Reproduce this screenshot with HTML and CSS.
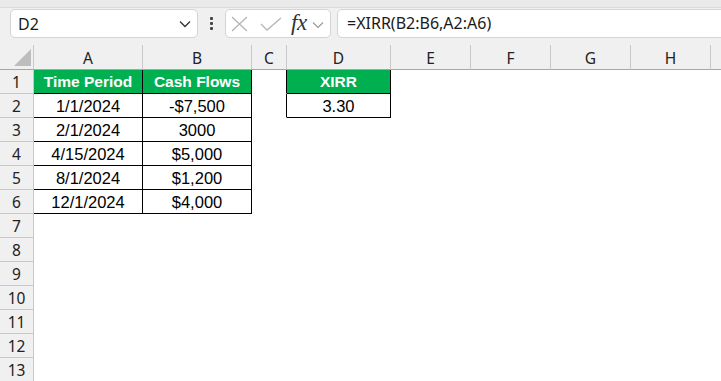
FILE: index.html
```html
<!DOCTYPE html>
<html>
<head>
<meta charset="utf-8">
<link rel="stylesheet" href="styles.css">
</head>
<body>
<div class="app">
  <div class="strip"></div>
  <div class="toolbar">
    <div class="namebox">
      <span class="name">D2</span>
      <svg class="chev" width="12" height="8" viewBox="0 0 12 8"><path d="M1 1.5 L6 6.5 L11 1.5" fill="none" stroke="#333" stroke-width="1.3"/></svg>
    </div>
    <div class="dots"><span></span><span></span><span></span></div>
    <div class="fxbox">
      <svg class="ico" width="20" height="16" viewBox="0 0 20 16"><path d="M2 1 L17 15 M17 1 L2 15" stroke="#b5b5b5" stroke-width="1.3" fill="none"/></svg>
      <svg class="ico chk" width="22" height="14" viewBox="0 0 22 14"><path d="M1 7 L7 13 L21 1" stroke="#b5b5b5" stroke-width="1.3" fill="none"/></svg>
      <span class="fx">fx</span>
      <svg class="ico smallchev" width="12" height="8" viewBox="0 0 12 8"><path d="M1 1.5 L6 6.5 L11 1.5" fill="none" stroke="#9a9a9a" stroke-width="1.2"/></svg>
    </div>
    <div class="formula">=XIRR(B2:B6,A2:A6)</div>
  </div>
  <div class="sheet">
    <div class="corner"><svg width="17" height="17" viewBox="0 0 17 17"><path d="M17 0 L17 17 L0 17 Z" fill="#bdbdbd"/></svg></div>
    <div class="ch">A</div><div class="ch">B</div><div class="ch">C</div><div class="ch">D</div><div class="ch">E</div><div class="ch">F</div><div class="ch">G</div><div class="ch">H</div><div class="ch last"></div>

    <div class="rh">1</div><div class="c b g">Time Period</div><div class="c b g">Cash Flows</div><div class="c br"></div><div class="c b g">XIRR</div><div class="c"></div><div class="c"></div><div class="c"></div><div class="c"></div><div class="c"></div>

    <div class="rh">2</div><div class="c b">1/1/2024</div><div class="c b">-$7,500</div><div class="c br"></div><div class="c b">3.30</div><div class="c"></div><div class="c"></div><div class="c"></div><div class="c"></div><div class="c"></div>

    <div class="rh">3</div><div class="c b">2/1/2024</div><div class="c b">3000</div><div class="c"></div><div class="c"></div><div class="c"></div><div class="c"></div><div class="c"></div><div class="c"></div><div class="c"></div>

    <div class="rh">4</div><div class="c b">4/15/2024</div><div class="c b">$5,000</div><div class="c"></div><div class="c"></div><div class="c"></div><div class="c"></div><div class="c"></div><div class="c"></div><div class="c"></div>

    <div class="rh">5</div><div class="c b">8/1/2024</div><div class="c b">$1,200</div><div class="c"></div><div class="c"></div><div class="c"></div><div class="c"></div><div class="c"></div><div class="c"></div><div class="c"></div>

    <div class="rh">6</div><div class="c b">12/1/2024</div><div class="c b">$4,000</div><div class="c"></div><div class="c"></div><div class="c"></div><div class="c"></div><div class="c"></div><div class="c"></div><div class="c"></div>

    <div class="rh">7</div><div class="c"></div><div class="c"></div><div class="c"></div><div class="c"></div><div class="c"></div><div class="c"></div><div class="c"></div><div class="c"></div><div class="c"></div>
    <div class="rh">8</div><div class="c"></div><div class="c"></div><div class="c"></div><div class="c"></div><div class="c"></div><div class="c"></div><div class="c"></div><div class="c"></div><div class="c"></div>
    <div class="rh">9</div><div class="c"></div><div class="c"></div><div class="c"></div><div class="c"></div><div class="c"></div><div class="c"></div><div class="c"></div><div class="c"></div><div class="c"></div>
    <div class="rh">10</div><div class="c"></div><div class="c"></div><div class="c"></div><div class="c"></div><div class="c"></div><div class="c"></div><div class="c"></div><div class="c"></div><div class="c"></div>
    <div class="rh">11</div><div class="c"></div><div class="c"></div><div class="c"></div><div class="c"></div><div class="c"></div><div class="c"></div><div class="c"></div><div class="c"></div><div class="c"></div>
    <div class="rh">12</div><div class="c"></div><div class="c"></div><div class="c"></div><div class="c"></div><div class="c"></div><div class="c"></div><div class="c"></div><div class="c"></div><div class="c"></div>
    <div class="rh">13</div><div class="c"></div><div class="c"></div><div class="c"></div><div class="c"></div><div class="c"></div><div class="c"></div><div class="c"></div><div class="c"></div><div class="c"></div>
  </div>
</div>
</body>
</html>
```
FILE: styles.css
```css
* { box-sizing: border-box; }
html, body { margin: 0; padding: 0; }
body { width: 721px; height: 381px; overflow: hidden; background: #fff; font-family: "Noto Sans", "Open Sans", sans-serif; }
.app { display: flex; flex-direction: column; }
.strip { height: 8px; background: #eaeaea; border-bottom: 1px solid #dcdcdc; }
.toolbar { height: 37px; background: #f0f0f0; display: flex; align-items: flex-start; padding-top: 1px; overflow: hidden; }
.namebox { margin-left: 10px; width: 188px; height: 29px; background: #fff; border: 1px solid #d4d4d4; border-radius: 5px; display: flex; align-items: center; justify-content: space-between; padding: 0 6px 0 7px; }
.name { font-size: 16px; color: #1a1a1a; }
.chev { margin-top: 1px; }
.dots { width: 27px; height: 29px; display: flex; flex-direction: column; align-items: center; justify-content: center; gap: 2px; }
.dots span { width: 3px; height: 3px; background: #444; border-radius: 1px; }
.fxbox { width: 106px; height: 29px; background: #fff; border: 1px solid #d4d4d4; border-radius: 5px; display: flex; align-items: center; padding-left: 4px; }
.ico { display: block; }
.chk { margin-left: 10px; }
.fx { font-family: "Liberation Serif", "DejaVu Serif", serif; font-style: italic; font-size: 23px; color: #333; margin-left: 9px; line-height: 1; margin-top: -3px; letter-spacing: -0.5px; }
.smallchev { margin-left: 5px; margin-top: 2px; }
.formula { flex: 1; margin-left: 6px; margin-right: -10px; height: 29px; background: #fff; border: 1px solid #d4d4d4; border-radius: 5px; font-size: 16px; color: #1a1a1a; padding-left: 9px; line-height: 27px; }
.sheet { display: grid; grid-template-columns: 34px 109px 109px 35px 104px 80px 80px 80px 80px 1fr; grid-template-rows: 25px repeat(13, 24px); }
.corner { background: #f0f0f0; border-right: 1px solid #c8c8c8; border-bottom: 1px solid #a6a6a6; display: flex; align-items: flex-end; justify-content: flex-end; padding: 0 2px 3px 0; }
.corner svg { display: block; }
.ch { background: #f0f0f0; border-right: 1px solid #c8c8c8; border-bottom: 1px solid #a6a6a6; text-align: center; font-size: 15.5px; color: #222; line-height: 26px; }
.ch.last { border-right: none; }
.rh { background: #f0f0f0; border-right: 1px solid #c8c8c8; border-bottom: 1px solid #c8c8c8; text-align: center; font-size: 15.5px; color: #222; line-height: 24px; }
.c { background: #fff; border-right: 1px solid transparent; border-bottom: 1px solid transparent; font-family: "Liberation Sans", Arial, sans-serif; font-size: 16.5px; color: #000; text-align: center; line-height: 24px; white-space: nowrap; overflow: hidden; }
.b { border-right-color: #000; border-bottom-color: #000; }
.br { border-right-color: #000; }
.g { background: #00b050; color: #fff; font-weight: bold; font-size: 15.5px; }
```
